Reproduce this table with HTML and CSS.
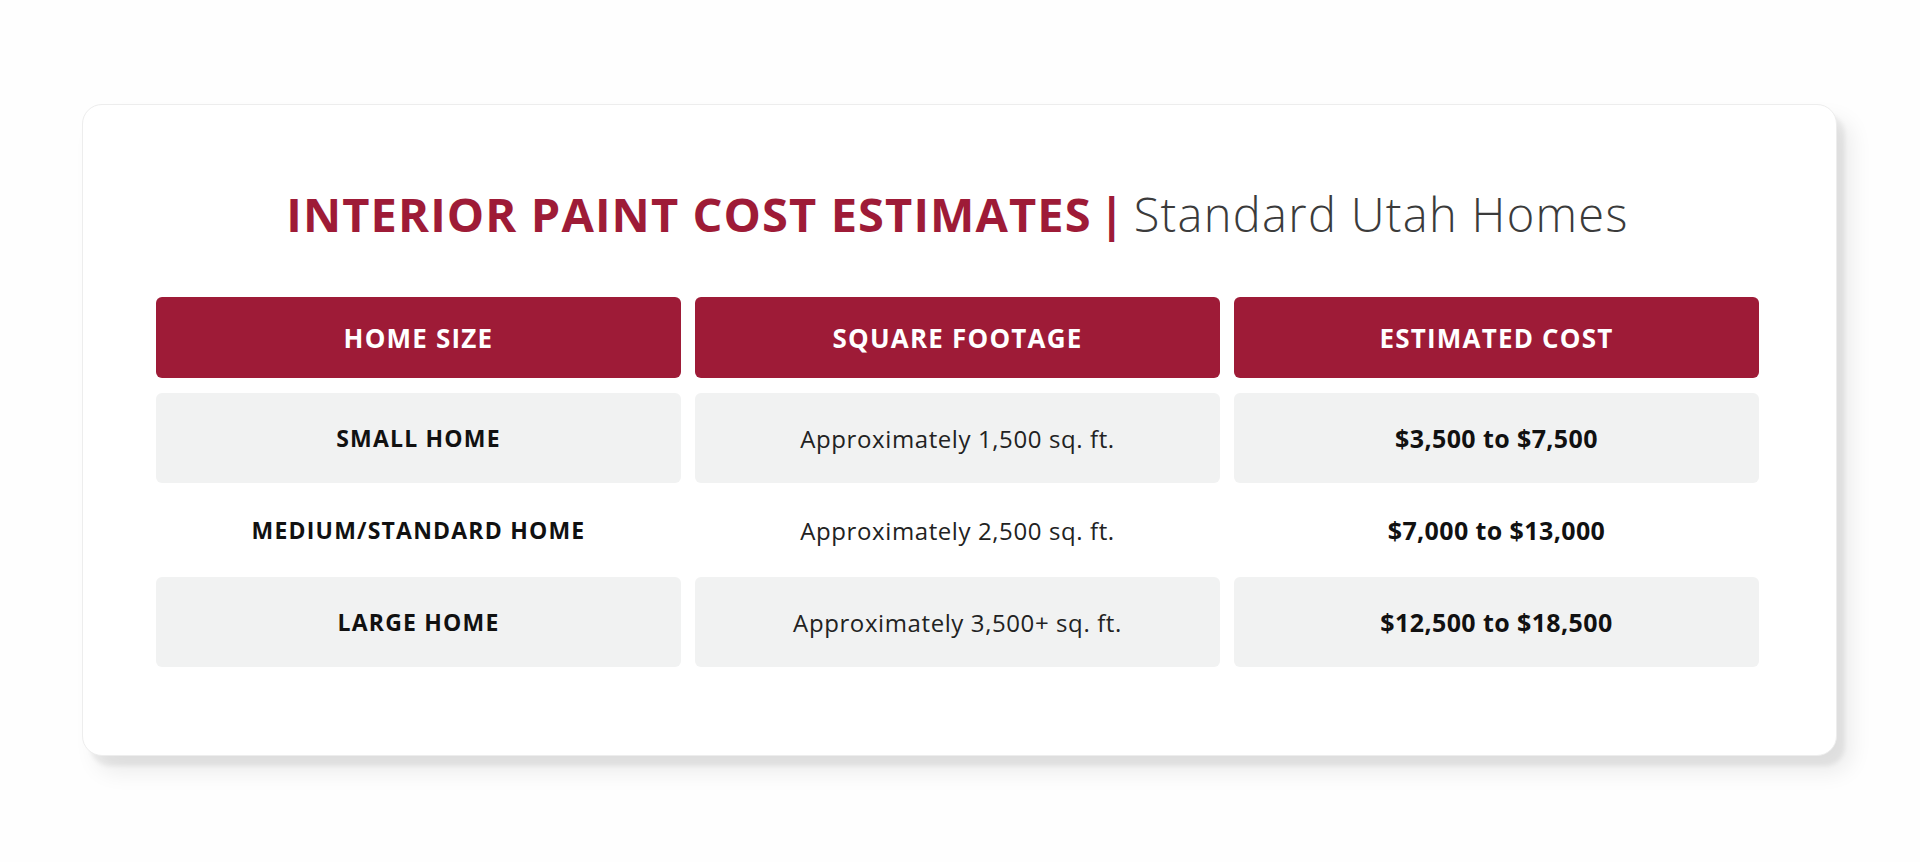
FILE: index.html
```html
<!DOCTYPE html>
<html lang="en">
<head>
<meta charset="utf-8">
<title>Interior Paint Cost Estimates</title>
<link rel="stylesheet" href="styles.css">
</head>
<body>
<main class="page">
  <section class="card">
    <h1 class="title"><span class="title-main">INTERIOR PAINT COST ESTIMATES</span><span class="title-bar">|</span><span class="title-sub">Standard Utah Homes</span></h1>
    <div class="table">
      <div class="row head-row">
        <div class="cell head">HOME SIZE</div>
        <div class="cell head">SQUARE FOOTAGE</div>
        <div class="cell head">ESTIMATED COST</div>
      </div>
      <div class="row shaded">
        <div class="cell label">SMALL HOME</div>
        <div class="cell sqft">Approximately 1,500 sq. ft.</div>
        <div class="cell cost">$3,500 to $7,500</div>
      </div>
      <div class="row">
        <div class="cell label">MEDIUM/STANDARD HOME</div>
        <div class="cell sqft">Approximately 2,500 sq. ft.</div>
        <div class="cell cost">$7,000 to $13,000</div>
      </div>
      <div class="row shaded">
        <div class="cell label">LARGE HOME</div>
        <div class="cell sqft">Approximately 3,500+ sq. ft.</div>
        <div class="cell cost">$12,500 to $18,500</div>
      </div>
    </div>
  </section>
</main>
</body>
</html>
```
FILE: styles.css
```css
html, body {
  margin: 0;
  padding: 0;
  background: #fefefe;
}

body {
  font-family: "Open Sans", "Liberation Sans", sans-serif;
  color: #111;
}

.page {
  box-sizing: border-box;
  min-height: 862px;
  padding: 104px 83px 107px 82px;
}

.card {
  box-sizing: border-box;
  width: 1755px;
  background: #fff;
  border: 1px solid #ededed;
  border-radius: 20px;
  box-shadow: 8px 10px 4px rgba(0, 0, 0, 0.06), 14px 16px 22px rgba(0, 0, 0, 0.08);
  padding: 81px 77px 88px 73px;
}

.title {
  margin: 0 0 55px;
  text-align: center;
  font-size: 47px;
  line-height: 1.2;
  font-weight: 400;
  white-space: nowrap;
}

.title-main {
  color: #9e1b37;
  font-weight: 700;
  letter-spacing: 1.1px;
}

.title-bar {
  color: #9e1b37;
  font-weight: 700;
  margin: 0 9px 0 7px;
}

.title-sub {
  color: #3b3b3b;
  font-weight: 300;
  letter-spacing: 1.3px;
}

.table {
  display: flex;
  flex-direction: column;
  gap: 2px;
}

.row {
  display: grid;
  grid-template-columns: repeat(3, 1fr);
  column-gap: 14px;
  height: 90px;
}

.head-row {
  height: 81px;
  margin-bottom: 13px;
}

.cell {
  display: flex;
  align-items: center;
  justify-content: center;
  border-radius: 6px;
  white-space: nowrap;
}

.head {
  background: #9e1b37;
  color: #fff;
  font-weight: 700;
  font-size: 26px;
  letter-spacing: 1.2px;
}

.shaded .cell {
  background: #f1f2f2;
}

.label {
  font-weight: 700;
  font-size: 23px;
  letter-spacing: 1.2px;
  color: #111;
}

.sqft {
  font-weight: 400;
  font-size: 24px;
  letter-spacing: 0.6px;
  color: #222;
}

.cost {
  font-weight: 700;
  font-size: 25px;
  letter-spacing: 0.4px;
  color: #111;
}
```
